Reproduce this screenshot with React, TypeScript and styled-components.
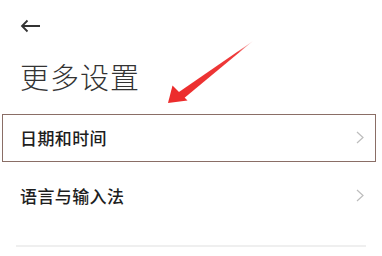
import React, { FC } from 'react';
import styled, { createGlobalStyle } from 'styled-components';

const GlobalStyle = createGlobalStyle`
  html, body {
    margin: 0;
    padding: 0;
    background: #fff;
  }
  body {
    font-family: "Noto Sans CJK SC", "Noto Sans", sans-serif;
  }
`;

const Page = styled.div`
  position: relative;
  width: 382px;
  height: 256px;
  overflow: hidden;
  background: #fff;
`;

const Header = styled.div`
  display: flex;
  flex-direction: column;
  padding: 17px 20px 0;
`;

const BackButton = styled.button`
  display: flex;
  align-items: center;
  width: 22px;
  height: 18px;
  padding: 0;
  border: none;
  background: none;
  color: #333;
`;

const Title = styled.h1`
  margin: 21px 0 0;
  font-size: 29px;
  line-height: 40px;
  font-weight: 300;
  color: #333;
  letter-spacing: 1px;
`;

const List = styled.div`
  display: flex;
  flex-direction: column;
  margin-top: 12px;
`;

const Row = styled.div`
  display: flex;
  align-items: center;
  justify-content: space-between;
  height: 58px;
  padding: 0 18px 0 20px;
`;

const RowLabel = styled.span`
  font-size: 17px;
  font-weight: 500;
  color: #1e1e1e;
  letter-spacing: 0.4px;
`;

const Chevron = styled.svg`
  width: 8px;
  height: 13px;
  color: #bdbdbd;
`;

const Divider = styled.div`
  height: 2px;
  margin: 21px 16px 0 16px;
  background: #efefef;
`;

const Highlight = styled.div`
  position: absolute;
  left: 2px;
  top: 114px;
  width: 372px;
  height: 46px;
  border: 1px solid #8a6e66;
  pointer-events: none;
`;

const Pointer = styled.svg`
  position: absolute;
  left: 160px;
  top: 36px;
  width: 100px;
  height: 72px;
  pointer-events: none;
`;

const ITEMS = ['日期和时间', '语言与输入法'];

const SettingRow: FC<{ label: string }> = ({ label }) => (
  <Row>
    <RowLabel>{label}</RowLabel>
    <Chevron viewBox="0 0 8 13" fill="none">
      <path d="M1 1l6 5.5L1 12" stroke="currentColor" strokeWidth="1.2" />
    </Chevron>
  </Row>
);

export default function App() {
  return (
    <Page>
      <GlobalStyle />
      <Header>
        <BackButton aria-label="back">
          <svg width="21" height="14" viewBox="0 0 21 14" fill="none">
            <path d="M20 7H2M7.5 1.5L2 7l5.5 5.5" stroke="currentColor" strokeWidth="1.8" />
          </svg>
        </BackButton>
        <Title>更多设置</Title>
      </Header>
      <List>
        {ITEMS.map((item) => (
          <SettingRow key={item} label={item} />
        ))}
      </List>
      <Divider />
      <Highlight />
      <Pointer viewBox="0 0 100 72">
        <defs>
          <linearGradient id="arrowFade" x1="1" y1="0" x2="0" y2="1">
            <stop offset="0" stopColor="#f06060" stopOpacity="0.25" />
            <stop offset="0.2" stopColor="#ee3a3a" />
            <stop offset="1" stopColor="#ec2c2c" />
          </linearGradient>
        </defs>
        <path d="M93 5 L17.5 57 L22.5 63.5 Z" fill="url(#arrowFade)" />
        <path d="M8 67 L12.5 49.5 L27.5 64.5 Z" fill="#ec2c2c" />
      </Pointer>
    </Page>
  );
}
